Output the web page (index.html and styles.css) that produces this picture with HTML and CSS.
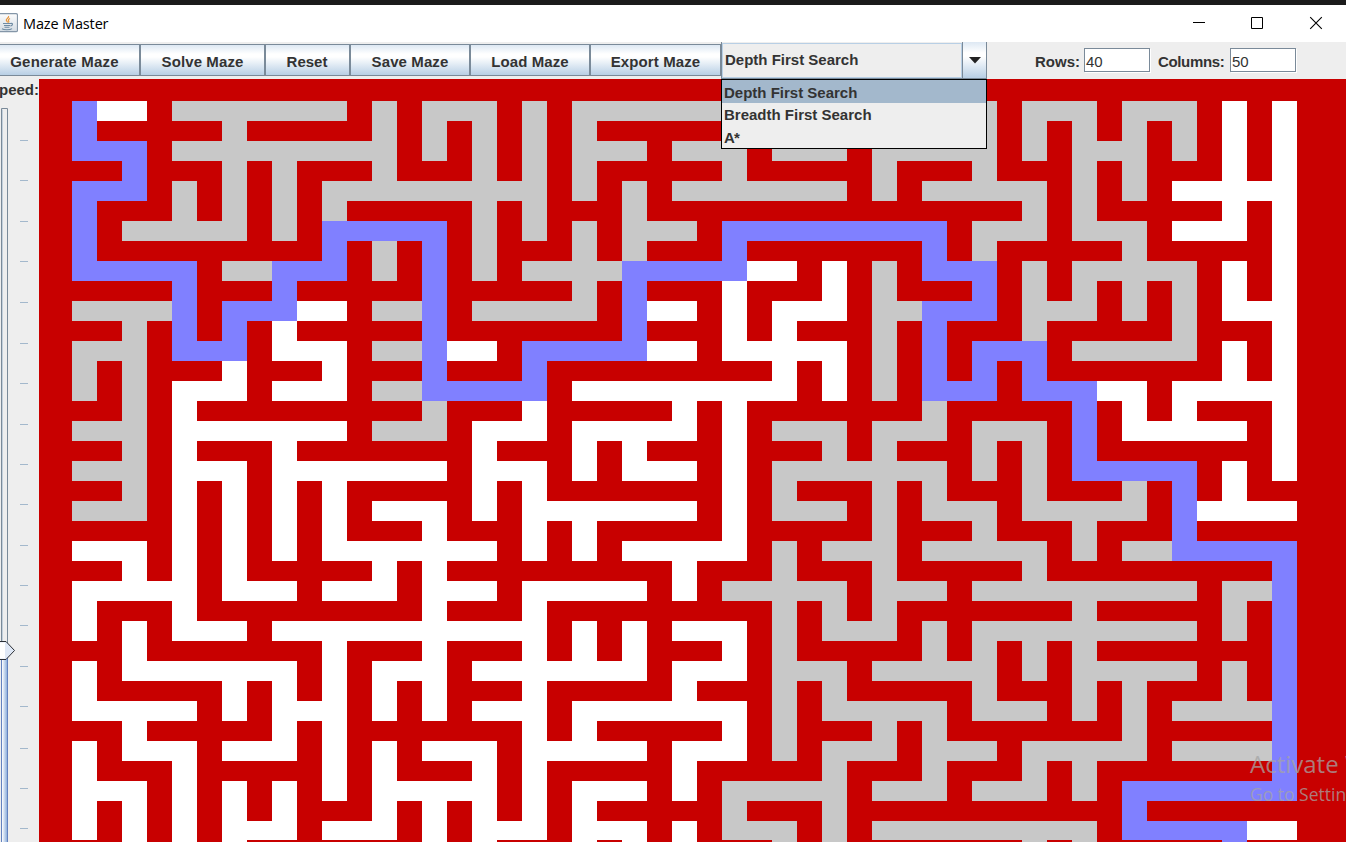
FILE: index.html
```html
<!DOCTYPE html>
<html lang="en">
<head>
<meta charset="utf-8">
<title>Maze Master</title>
<link rel="stylesheet" href="styles.css">
</head>
<body>
<div class="window">
  <div class="desktop-strip"></div>
  <header class="titlebar">
    <svg class="app-icon" width="18" height="20" viewBox="0 0 18 20">
      <defs><linearGradient id="tile" x1="0" y1="0" x2="0" y2="1"><stop offset="0" stop-color="#fdfdfd"/><stop offset="1" stop-color="#d3dbe3"/></linearGradient></defs>
      <rect x="-2.500" y="0.700" width="20" height="18" rx="1.500" fill="url(#tile)" stroke="#8496a8" stroke-width="1.200"/>
      <path d="M8.500 3c1.200 1.500-2.600 2.600-2.200 4.200.2 1 1.300 1.300 1.300 2.300M10 5.500c-1.600.9-2 1.700-1.300 2.600.4.600.2 1-.2 1.500" fill="none" stroke="#e8963c" stroke-width="1.200"/>
      <path d="M3 10.500h7.500M4 12.500h6M4.500 14.200h5M10.500 10.500c3-.7 2.300 2.200-.2 2.500M2 15.800c2 1.300 8 1.300 10-.2" fill="none" stroke="#6f8ba3" stroke-width="1.100"/>
    </svg>
    <h1 class="title">Maze Master</h1>
    <div class="controls">
      <svg width="14" height="14" viewBox="0 0 14 14"><path d="M2 6.500h12"/></svg>
      <svg width="14" height="14" viewBox="0 0 14 14"><path d="M1.500 1.500h11v11h-11z"/></svg>
      <svg class="close" width="14" height="14" viewBox="0 0 14 14"><path d="M1.200 1.200l11.600 11.600M12.800 1.200L1.200 12.800"/></svg>
    </div>
  </header>
  <div class="toolbar">
    <div class="buttons">
      <button class="btn btn-generate">Generate Maze</button>
      <button class="btn btn-solve">Solve Maze</button>
      <button class="btn btn-reset">Reset</button>
      <button class="btn btn-file">Save Maze</button>
      <button class="btn btn-file">Load Maze</button>
      <button class="btn btn-export">Export Maze</button>
    </div>
    <div class="combo">
      <div class="combo-value">Depth First Search</div>
      <div class="combo-arrow"><svg width="12" height="7" viewBox="0 0 12 7"><path d="M0 0h12L6 6.500z" fill="#222"/></svg></div>
      <ul class="popup">
        <li class="option selected">Depth First Search</li>
        <li class="option">Breadth First Search</li>
        <li class="option option-short">A*</li>
      </ul>
    </div>
    <div class="fields">
      <label class="lbl">Rows:</label><div class="field">40</div>
      <label class="lbl lbl-cols">Columns:</label><div class="field">50</div>
    </div>
  </div>
  <div class="main">
    <aside class="side">
      <div class="speed">Speed:</div>
      <svg class="slider" id="slider" width="39" height="740" viewBox="0 102 39 740">
        <defs><linearGradient id="fill" x1="0" x2="1" y1="0" y2="0"><stop offset="0" stop-color="#ffffff"/><stop offset="1" stop-color="#8fb0dc"/></linearGradient></defs>
        <path d="M1.500 842V108.500H7.500V842" fill="#eeeeee" stroke="#7a8a99"/>
        <path d="M2.500 842V109.500" stroke="#c3d0dc"/>
        <rect x="2" y="650" width="5" height="192" fill="url(#fill)"/>
        <path d="M1.500 650V842M7.500 650V842" stroke="#6382bf"/>
        <path d="M-1 641.500H6L14.500 650.500L6 659.500H-1z" fill="#dfe8f6" stroke="#2b2f36"/>
        <path d="M0 642.500H5V658.500H0z" fill="#ffffff"/>
        <g id="ticks" stroke="#a3b8cc"></g>
      </svg>
    </aside>
    <div class="board">
      <svg id="maze" width="1225" height="741" viewBox="0 0 1225 741" shape-rendering="crispEdges"></svg>
    </div>
  </div>
  <div class="watermark">
    <div class="wm-title">Activate Windows</div>
    <div class="wm-sub">Go to Settings to activate Windows.</div>
  </div>
</div>
<script src="maze.js"></script>
</body>
</html>
```
FILE: styles.css
```css
* { box-sizing: border-box; }
body { margin: 0; overflow: hidden; font-family: "Liberation Sans", Arial, sans-serif; color: #333; }
.window { position: relative; width: 1346px; height: 842px; overflow: hidden; background: #eee; display: flex; flex-direction: column; }
.desktop-strip { height: 5px; background: #1b1b1b; flex: none; }
.titlebar { height: 37px; flex: none; background: #fff; display: flex; align-items: center; padding-right: 23px; }
.app-icon { flex: none; margin-top: -2px; }
.title { margin: 0 auto 0 5px; font: 400 14.500px/20px "Open Sans", "Noto Sans", sans-serif; letter-spacing: -0.15px; color: #000; }
.controls { display: flex; gap: 45px; margin-top: -1px; }
.controls svg { fill: none; stroke: #000; stroke-width: 1; display: block; }
.controls .close { stroke-width: 1.100; }
.toolbar { height: 37px; flex: none; display: flex; background: #eee; }
.buttons { display: flex; width: 721px; padding-top: 2px; flex: none; }
.btn { height: 32px; padding: 2px 0 0; margin: 0; border: 1px solid #7a8a99; border-radius: 0; background: linear-gradient(#dde8f3 0%, #ffffff 30%, #ffffff 40%, #b8cfe5 100%); font: bold 15px "Liberation Sans", Arial, sans-serif; color: #333; white-space: nowrap; flex: none; }
.btn-generate { width: 151px; margin-left: -11px; letter-spacing: 0.200px; }
.btn-solve { width: 125px; letter-spacing: 0.100px; }
.btn-reset { width: 85px; padding-right: 1px; }
.btn-file { width: 120px; letter-spacing: 0.100px; }
.btn-export { width: 131px; letter-spacing: 0.100px; }
.combo { position: relative; width: 266px; height: 37px; display: flex; flex: none; border-left: 1px solid #7a8a99; border-bottom: 1px solid #7a8a99; font: bold 15px/32px "Liberation Sans", Arial, sans-serif; }
.combo-value { width: 240px; height: 35px; margin-top: 1px; padding-left: 2px; border: 1px solid #b8cfe5; }
.combo-arrow { flex: 1; display: flex; align-items: center; justify-content: center; border-left: 1px solid #7a8a99; border-right: 1px solid #7a8a99; background: linear-gradient(#dde8f3 0%, #ffffff 30%, #ffffff 40%, #b8cfe5 100%); }
.popup { position: absolute; left: -1px; top: 37px; width: 266px; height: 70px; margin: 0; padding: 0; list-style: none; border: 1px solid #000; background: #eee; z-index: 2; }
.option { height: 22px; padding-left: 2px; line-height: 23px; }
.option.selected { height: 23px; line-height: 25px; background: #a3b8cc; }
.option-short { line-height: 25px; letter-spacing: -0.800px; }
.fields { display: flex; padding: 6px 0 0 48px; font-size: 15px; }
.lbl { font-weight: bold; line-height: 27px; width: 49px; }
.lbl-cols { margin-left: 8px; width: 72px; letter-spacing: -0.350px; }
.field { width: 66px; height: 24px; padding-left: 1px; line-height: 26px; letter-spacing: -0.200px; border: 1px solid #7a8a99; background: #fff; box-shadow: 1px 1px 0 #fff; }
.main { display: flex; flex: 1; }
.side { width: 39px; flex: none; overflow: hidden; display: flex; flex-direction: column; align-items: flex-end; }
.speed { height: 23px; line-height: 22px; font-size: 15px; font-weight: bold; }
.slider { display: block; flex: none; }
.board { flex: 1; background: #c80000; padding: 22px 0 0 33px; }
.board svg { display: block; }
.open { fill: #fff; }
.visited { fill: #c8c8c8; }
.route { fill: #8080ff; }
.watermark { position: absolute; left: 1250px; top: 748px; color: rgba(165, 165, 165, 0.75); font-family: "Open Sans", "Noto Sans", sans-serif; white-space: nowrap; }
.wm-title { font-size: 24px; line-height: 32px; }
.wm-sub { font-size: 17.500px; line-height: 28px; }
```
FILE: maze.js
```javascript
// One string per maze row: # wall, W unvisited, G visited, P solution path.
const rows = [
  "PWW#GGGGGGG#G #GGG#G#GGGGG GGGGGGGGGGGG #GGG#GGG#W#W",
  "P#####G#####G #G#G#G#G#### ###########G #G#G#G#G#W#W",
  "PPP#GGGGGGGGG #G#G#G#GGG#G GG#GGG#GGGGG #G#GGG#G#W#W",
  "##P###G#G###G ###G#G#G#### #G#####G###G ###G#G###W#W",
  "PPP#G#G#G#GGG GGGGGG#G#G#G GGGGGG#G#GGG GG#G#G#WWWWW",
  "P###G#G#G#G## ###G#G###G## ############ #G#G#####W#W",
  "P#GGGGG#G#PPP PP#G#G#G#GGG #PPPPPPPPP#G GG#GGG#WWW#W",
  "P#########P#G #P#G###G#G## #P#######P#G #####G#####W",
  "PPPPP#GGPPP#G #P#G#GGGGPPP PPWW#W#G#PPP #G#GGGGG#W#W",
  "####P###P#### #P#####G#P## #W###W#G###P #G#G#G#G#W#W",
  "GGGGP#PPPWW#G GP#GGGGG#PWW #W#WWW#GGPPP #GGG#G#G#WWW",
  "##G#P#P#W#### #P#######P## #W#W###G#P## #G#####G###W",
  "GGG#PPP#WWW#G GPWW#PPPPPWW #WWWWW#G#P#P PP#GGGGG#W#W",
  "G#G###W###W## #P###P###### ###W#W#G#P#P #P#######W#W",
  "G#G#WWW#WWW#G GPPPPP#WWWWW WWWW#W#G#PPP #PPPWW#WWWWW",
  "##G#W######## #G###W#####W #W#######G## ###P#W#W###W",
  "GGG#WWWWWWW#G GG#WWW#WWWWW #W#GGG#GGG#G GG#P#WWWWW#W",
  "##G#W###W#### ###W###W#W## #W###G#G###G #G#P#######W",
  "GGG#WWW#WWWWW WW#WWW#W#WWW #W#GGGGGGG#G #G#PPPPP#W#W",
  "##G#W#W#W#W## ###W#W###### #W#G###G#G## #G###G#P#W##",
  "GGG#W#W#W#W#W WW#W#WWWWWWW #W#GGG#G#GGG #GGGGG#PWWWW",
  "####W#W#W#W## #W###W#W#### #W#####G###G ###G###P####",
  "WWW#W#W#W#WWW WWWW#W#W#WWW WW#G#GGG#GGG GG#G#GGPPPPP",
  "##W#W#W#####W #W#########W ###G###G#### #G#########P",
  "WWWWW#WWW#WWW #WWW#WWWWW#W #GGGGG#GGG#G GGGGGGGG#GGP",
  "W###W######## #W###W###### ###G#G#G#### ###G#####G#P",
  "W#W#WWW#WWWWW WWWWWW#W#W#W WW#G#GGG#G#G GGGGGGGG#G#P",
  "##W#######W## #W###W#W#W## #W#G#####G#G #G#G#######P",
  "W#WWWWWWW#W#W WW#WWWWWWW#W WW#GGG#GGGGG #G#GGGGG#G#P",
  "W#####W#W#W#W #W###W#####W ###G#G#####G ###G#G###G#P",
  "WWWWW#W#WWW#W #W#WWW#WWWWW WW#G#GGGGG#G GG#G#G#GGGGP",
  "##W#####W#W## #####W#W#### #W#G###G#G## #####G#####P",
  "W#WWW#WWW#W#W #WWW#WWWWW#W WW#G#GGG#GGG #GGGGG#GGGGP",
  "W###W#####W#W ###W#W#####W #####G###G## #G#G#######P",
  "WWW#W#W#W#W#W WWWW#W#WWW#W #GGGGG#GGG#G GG#G#PPPPPPP",
  "W#W#W#W#W###W #W#W#W#W#### #G###G###### #####P######",
  "W#W#W#WWW#WWW #W#WWW#WWW#W #GGG#G#GGGGG GGGG#PPPPPWW",
  "##W#W#W###### #W#W###W#W#W ###G#G###### #G#G#####P##"
];
const NS = "http://www.w3.org/2000/svg";
const kinds = { W: "open", G: "visited", P: "route" };
const maze = document.getElementById("maze");
const rowTop = (r) => (r < 37 ? r * 20 : r * 20 - 1);

rows.forEach((text, r) => {
  for (const run of text.replace(/ /g, "").matchAll(/W+|G+|P+/g)) {
    const rect = document.createElementNS(NS, "rect");
    rect.setAttribute("class", kinds[run[0][0]]);
    rect.setAttribute("x", run.index * 25);
    rect.setAttribute("y", rowTop(r));
    rect.setAttribute("width", run[0].length * 25);
    rect.setAttribute("height", r < 37 ? rowTop(r + 1) - rowTop(r) : 20);
    maze.appendChild(rect);
  }
});

const ticks = document.getElementById("ticks");
[140, 180, 221, 261, 302, 343, 383, 424, 464, 504, 545, 585, 625, 666, 706, 748, 788, 828].forEach((y) => {
  const line = document.createElementNS(NS, "path");
  line.setAttribute("d", `M20 ${y + 0.5}h8`);
  ticks.appendChild(line);
});
```
